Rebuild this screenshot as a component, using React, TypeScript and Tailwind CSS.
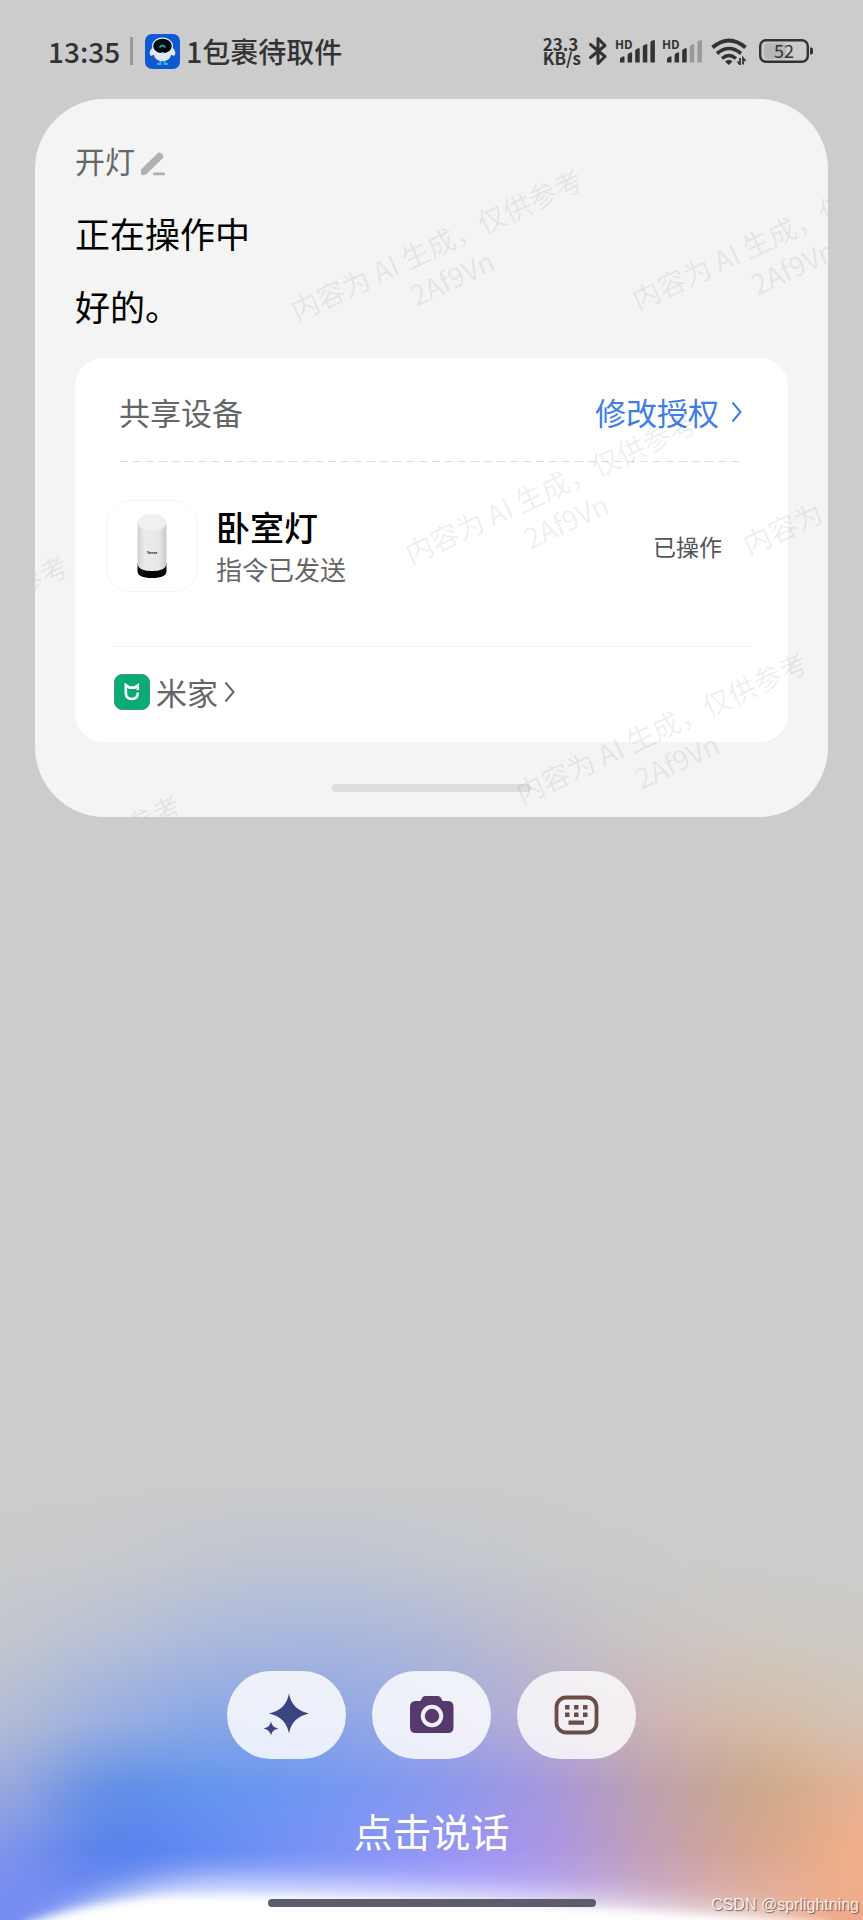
import { useState } from 'react'

// 底部光晕的纵向色带：每一列从上到下的颜色
const glowOffsets = [0, 0.18, 0.36, 0.55, 0.7, 0.84, 0.91, 1]
const glowColumns = [
  ['#cccccc', '#cacbcc', '#c3c7ce', '#b6bdd4', '#9fabde', '#8497ea', '#7c90f0', '#768cf0'],
  ['#cccccc', '#c8cacd', '#b8c0d6', '#98aee2', '#5f8de4', '#5480ec', '#6285ef', '#6c8cf2'],
  ['#cccccc', '#c1c6d1', '#abb9dc', '#85a6e7', '#6496ef', '#668cf4', '#829df8', '#98aefa'],
  ['#cccccc', '#bfc5d3', '#a8b7de', '#8ca5e7', '#7297f3', '#7c94f6', '#8f9ffa', '#aab4fc'],
  ['#cccccc', '#c3c8d0', '#b0b8d8', '#9ba9e4', '#8798ee', '#9396f5', '#a19ffa', '#bab8fc'],
  ['#cccccc', '#c8cacc', '#c0bccb', '#b7add2', '#a596e2', '#a996ea', '#b2a2f2', '#c8bdf6'],
  ['#cccccc', '#cacccb', '#cbc5c3', '#cdb3b4', '#bda1ae', '#c29fb6', '#c8a8c2', '#d4bcd4'],
  ['#cccccc', '#cccccb', '#cfc9c2', '#d5bba5', '#cca888', '#d6a68c', '#dfac98', '#e6b8a8'],
  ['#cccccc', '#cccccc', '#cecbc6', '#d4c4b4', '#e5b397', '#f3b088', '#f3ae88', '#f0a784'],
]

const watermarks = [
  'left-[409px] top-[162px]',
  'left-[750px] top-[151px]',
  'left-[523px] top-[405px]',
  'left-[861px] top-[396px]',
  'left-[634px] top-[645px]',
  'left-[-105px] top-[548px]',
  'left-[8px] top-[788px]',
]

function Glow() {
  return (
    <svg
      className="pointer-events-none absolute inset-x-0 bottom-0 h-[440px] w-full"
      viewBox="0 0 863 440"
      preserveAspectRatio="none"
      aria-hidden="true"
    >
      <defs>
        {glowColumns.map((colors, i) => (
          <linearGradient key={i} id={`glow-${i}`} x1="0" y1="0" x2="0" y2="1">
            {colors.map((color, j) => (
              <stop key={j} offset={glowOffsets[j]} stopColor={color} />
            ))}
          </linearGradient>
        ))}
        <filter id="glow-blur" filterUnits="userSpaceOnUse" x="-200" y="0" width="1263" height="440" colorInterpolationFilters="sRGB">
          <feGaussianBlur stdDeviation="44 0" />
        </filter>
        <filter id="haze-blur" filterUnits="userSpaceOnUse" x="-100" y="300" width="1063" height="260" colorInterpolationFilters="sRGB">
          <feGaussianBlur stdDeviation="22 14" />
        </filter>
        <filter id="shine-blur" filterUnits="userSpaceOnUse" x="-100" y="340" width="1063" height="200" colorInterpolationFilters="sRGB">
          <feGaussianBlur stdDeviation="6 5" />
        </filter>
      </defs>
      <g filter="url(#glow-blur)">
        {glowColumns.map((_, i) => {
          const first = i === 0
          const last = i === glowColumns.length - 1
          return (
            <rect
              key={i}
              x={first ? -200 : i * 108 - 54}
              y="0"
              width={first || last ? 260 : 109}
              height="440"
              fill={`url(#glow-${i})`}
            />
          )
        })}
      </g>
      <path
        d="M50 444 Q110 408 190 402 Q330 402 500 414 Q680 428 800 444 V500 H50 Z"
        fill="#fff"
        fillOpacity=".8"
        filter="url(#haze-blur)"
      />
      <path
        d="M24 444 Q100 420 175 416 Q330 417 500 424 Q680 434 830 444 V480 H24 Z"
        fill="#fff"
        filter="url(#shine-blur)"
      />
    </svg>
  )
}

function ParcelIcon() {
  return (
    <svg className="size-[35px]" viewBox="0 0 35 35" aria-hidden="true">
      <rect width="35" height="35" rx="7" fill="#1059d6" />
      <path d="M8 13C4 17 4 20 6 22c1-1 2-1 3-1 1 4 4 6 8.500 6s7.500-2 8.500-6c1 0 2 0 3 1 2-2 2-5-2-9z" fill="#e4e8ee" />
      <ellipse cx="17.500" cy="12" rx="10.500" ry="8.500" fill="#eef1f5" />
      <ellipse cx="17.500" cy="12" rx="9.300" ry="7.300" fill="#050b12" />
      <path d="M14.500 13.500q3-4 6 0" fill="none" stroke="#27b9c9" strokeWidth="1.300" />
      <path d="M16 18.500h3" stroke="#27b9c9" />
      <path d="M15.500 27v3h-3.500M19.500 27v3h3.500" fill="none" stroke="#2fb6e0" strokeWidth="2" />
    </svg>
  )
}

function BluetoothIcon() {
  return (
    <svg className="h-[30px] w-[18px]" viewBox="0 0 18 30" fill="none" stroke="#333" strokeWidth="3" strokeLinejoin="round" strokeLinecap="round" aria-hidden="true">
      <path d="M1.500 8.500 16 20.500 9 27.500V2.500l7 7L1.500 21.500" />
    </svg>
  )
}

function SignalIcon({ level }: { level: number }) {
  return (
    <svg className="h-[26px] w-[41px] overflow-visible" viewBox="0 0 41 26" aria-label={`HD 信号 ${level}`}>
      <text x="0" y="11" fontSize="12" fontWeight="700" fill="#333" fontFamily="'Noto Sans CJK SC', sans-serif">HD</text>
      {[0, 1, 2, 3, 4].map((i) => (
        <path
          key={i}
          d={`M${5 + i * 7.600} ${21 - i * 4.100}q0-1 1-1.500l2.500-1.200q1 0 1 .8v${6 + i * 4.100 - 0.600}h-4.500z`}
          fill={i < level ? '#333' : '#999'}
        />
      ))}
    </svg>
  )
}

function WifiIcon() {
  return (
    <svg className="h-[27px] w-9" viewBox="0 0 36 27" fill="none" stroke="#333" aria-hidden="true">
      <path d="M1.500 9.500Q18-4.500 34.500 9.500" strokeWidth="4" />
      <path d="M6 15.500Q18 5.500 30 15.500" strokeWidth="3.600" />
      <path d="M11 20.500Q18 14.500 25 20.500" strokeWidth="3.400" />
      <path d="M14 23.500q4-3.500 7.500 0L17.800 27z" fill="#333" stroke="none" />
      <path d="M29 20v6.500l-2.500-3M32 26.500V20l2.500 3" strokeWidth="1.800" />
    </svg>
  )
}

function BatteryIcon() {
  return (
    <svg className="h-6 w-[54px] overflow-visible" viewBox="0 0 54 24" aria-label="电量 52">
      <rect x="5" y="4" width="22" height="16" rx="3" fill="#b7b7b7" />
      <rect x="1.200" y="1.200" width="47.600" height="21.600" rx="6" fill="none" stroke="#333" strokeWidth="2.400" />
      <path d="M51 8.500h1q2 0 2 2v3q0 2-2 2h-1z" fill="#333" />
      <text x="25" y="18.500" textAnchor="middle" fontSize="18" fill="#333" fontFamily="'Noto Sans CJK SC', sans-serif">52</text>
    </svg>
  )
}

function Chevron() {
  return (
    <svg className="h-[22px] w-[11px]" viewBox="0 0 11 22" fill="none" stroke="currentColor" strokeWidth="2" aria-hidden="true">
      <path d="M1.500 1.500 9.500 11l-8 9.500" />
    </svg>
  )
}

function PenIcon() {
  return (
    <svg className="mt-2 size-6" viewBox="0 0 24 24" fill="#b0b0b0" aria-hidden="true">
      <path d="M0 17.500 16.700 1.300q1.800-1.500 3.500 0l1.500 1.500q1.500 1.700 0 3.500L5.500 22q-1 1-2.300 1H1.500Q0 23 0 21.500z" />
      <rect x="12" y="20.600" width="12" height="2.600" rx="1" />
    </svg>
  )
}

function LampPicture() {
  return (
    <svg className="h-[66px] w-[30px]" viewBox="0 0 30 66" role="img" aria-label="卧室灯">
      <defs>
        <linearGradient id="lamp-body" x1="0" x2="1">
          <stop offset="0" stopColor="#cfcfcf" />
          <stop offset=".25" stopColor="#ececec" />
          <stop offset=".75" stopColor="#e6e6e6" />
          <stop offset="1" stopColor="#c9c9c9" />
        </linearGradient>
      </defs>
      <path d="M.5 50h29v8q0 7-14.500 7T.5 58z" fill="#050505" />
      <path d="M.5 10h29v42q-2 6-14.500 6T.5 52z" fill="url(#lamp-body)" />
      <ellipse cx="15" cy="9.500" rx="14.500" ry="8.500" fill="#f0f0f0" />
      <text x="15" y="40.500" textAnchor="middle" fontSize="4" fontWeight="700" fill="#111" fontFamily="'Liberation Sans', sans-serif">Yeear</text>
    </svg>
  )
}

function MiHomeIcon() {
  return (
    <svg className="size-9" viewBox="0 0 36 36" aria-hidden="true">
      <rect x=".5" y=".5" width="35" height="35" rx="7.500" fill="#0bab76" stroke="#3f9c79" />
      <g fill="none" stroke="#fff" strokeWidth="2.600">
        <path d="M11.800 19v-7.800l3.800 2.400h5l3.200-2.200v4.600" />
        <path d="M11.800 18.500q0 6.500 6 6.500t6-6.500" />
      </g>
    </svg>
  )
}

function SparkleIcon() {
  return (
    <svg className="size-12" viewBox="0 0 48 48" fill="#3c4480" aria-hidden="true">
      <path d="M26 2.500C28 13 34 20 46 22.500 34 25 28 32 26 42.500 24 32 18 25 6 22.500 18 20 24 13 26 2.500z" />
      <path d="M8 30.500c1 4 3 6 7.500 7-4.500 1-6.500 3-7.500 7-1-4-3-6-7.500-7 4.500-1 6.500-3 7.500-7z" />
    </svg>
  )
}

function CameraIcon() {
  return (
    <svg className="size-12" viewBox="0 0 48 48" aria-hidden="true">
      <path
        d="M12 10q.8 0 1.500-2 1-3 4-3h12q3 0 4 3 .7 2 1.500 2H40q5.500 0 5.500 6v20q0 6-5.500 6H7.500Q2 42 2 36V16q0-6 5.500-6z"
        fill="#553a6b"
      />
      <circle cx="24" cy="25" r="9.200" fill="none" stroke="#efeefa" strokeWidth="4" />
    </svg>
  )
}

function KeyboardIcon() {
  return (
    <svg className="size-12" viewBox="0 0 48 48" fill="#6b4c46" aria-hidden="true">
      <rect x="3.500" y="6.500" width="40" height="35" rx="9.500" fill="none" stroke="#6b4c46" strokeWidth="3.800" />
      {[12, 21, 30].map((x) => (
        <g key={x}>
          <rect x={x} y="14" width="4.500" height="4.500" rx=".5" />
          <rect x={x} y="21.500" width="4.500" height="4.500" rx=".5" />
        </g>
      ))}
      <rect x="15.500" y="29.500" width="15.500" height="4.300" rx=".5" />
    </svg>
  )
}

function StatusBar() {
  return (
    <header className="flex h-[99px] items-start justify-between px-12 pt-[30px] text-[#333]">
      <div className="flex h-[42px] items-center text-[28px] font-medium">
        <span>13:35</span>
        <span className="ml-2.5 h-7 w-[3px] bg-[#999]" />
        <span className="ml-3">
          <ParcelIcon />
        </span>
        <span className="ml-1.5">1包裹待取件</span>
      </div>
      <div className="mr-0.5 flex h-[42px] items-center">
        <div className="mr-2 text-[17px] leading-[14px] font-bold">
          <div>23.3</div>
          <div>KB/s</div>
        </div>
        <BluetoothIcon />
        <div className="ml-2 flex gap-1.5">
          <SignalIcon level={5} />
          <SignalIcon level={3} />
        </div>
        <div className="mr-3 ml-2">
          <WifiIcon />
        </div>
        <BatteryIcon />
      </div>
    </header>
  )
}

function DeviceCard() {
  return (
    <section className="mt-[26px] rounded-[28px] bg-white">
      <div className="mr-[46px] ml-11 flex items-center justify-between pt-[31px] pb-[26px] text-[31px] leading-[46px]">
        <h2 className="text-[#666]">共享设备</h2>
        <a href="#auth" className="flex items-center gap-3 text-[#3f7ee8]">
          修改授权
          <Chevron />
        </a>
      </div>
      <div className="mr-11 ml-[45px] h-px bg-[repeating-linear-gradient(90deg,#dedede_0_8px,transparent_8px_13px)]" />
      <div className="mr-[66px] ml-[31px] flex items-center pt-[38px] pb-[54px]">
        <div className="flex size-[92px] items-center justify-center rounded-3xl border border-[#f5f5f5]">
          <LampPicture />
        </div>
        <div className="ml-[18px] flex-1 pt-1">
          <h3 className="text-[34px] leading-[42px] font-medium text-black">卧室灯</h3>
          <p className="text-[26px] leading-[42px] text-[#666]">指令已发送</p>
        </div>
        <span className="text-[23px] text-[#555]">已操作</span>
      </div>
      <div className="mr-[37px] ml-[39px] h-px bg-[#f2f2f2]" />
      <a href="#mihome" className="ml-[39px] flex w-fit items-center pt-[22px] pb-[27px] text-[31px] leading-[46px] text-[#666]">
        <MiHomeIcon />
        <span className="mx-1.5">米家</span>
        <Chevron />
      </a>
    </section>
  )
}

export default function App() {
  const [listening, setListening] = useState(false)

  return (
    <div className="relative flex min-h-screen flex-col overflow-hidden bg-[#ccc] font-['Noto_Sans_CJK_SC',sans-serif]">
      <Glow />
      <StatusBar />

      {/* 对话卡片 */}
      <main className="relative mx-[35px] overflow-hidden rounded-[70px] bg-[#f4f4f4] px-10 pt-[38px] pb-[25px]">
        <button type="button" className="flex items-center gap-1.5 text-[30px] leading-[46px] text-[#666]">
          开灯
          <PenIcon />
        </button>
        <p className="mt-6 text-[35px] leading-[52px] text-black">正在操作中</p>
        <p className="mt-[21px] text-[35px] leading-[52px] text-black">好的。</p>
        <DeviceCard />
        <div className="mx-auto mt-[42px] h-2 w-[199px] rounded-full bg-[#dedede]" />

        {/* 水印 */}
        <div className="pointer-events-none absolute inset-0">
          {watermarks.map((position) => (
            <p
              key={position}
              className={`absolute -translate-1/2 -rotate-25 text-center text-[28px] leading-[37px] whitespace-nowrap text-black/8 ${position}`}
            >
              内容为 AI 生成，仅供参考
              <br />
              2Af9Vn
            </p>
          ))}
        </div>
      </main>

      {/* 底部操作区 */}
      <footer className="relative mt-auto flex flex-col items-center pb-[13px]">
        <div className="flex gap-[26px]">
          <button type="button" aria-label="灵感" className="flex h-[88px] w-[119px] items-center justify-center rounded-full bg-white/83">
            <SparkleIcon />
          </button>
          <button type="button" aria-label="拍照" className="flex h-[88px] w-[119px] items-center justify-center rounded-full bg-white/83">
            <CameraIcon />
          </button>
          <button type="button" aria-label="键盘" className="flex h-[88px] w-[119px] items-center justify-center rounded-full bg-white/80">
            <KeyboardIcon />
          </button>
        </div>
        <button
          type="button"
          aria-pressed={listening}
          onClick={() => setListening(!listening)}
          className="mt-[43px] text-[39px] leading-[56px] text-white"
        >
          点击说话
        </button>
        <div className="mt-[41px] h-2 w-[328px] rounded-full bg-[#5e5c68]" />
        <span className="absolute right-1 bottom-[3px] font-['Liberation_Sans',sans-serif] text-[16px] leading-6 text-white/85 [text-shadow:1px_1px_1px_rgba(0,0,0,0.5)]">
          CSDN @sprlightning
        </span>
      </footer>
    </div>
  )
}
